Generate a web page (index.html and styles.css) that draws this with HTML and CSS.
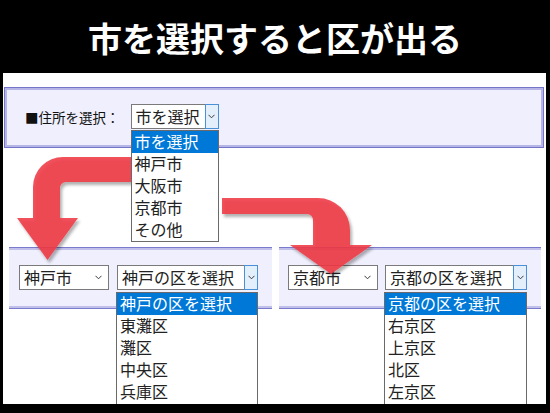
FILE: index.html
```html
<!DOCTYPE html>
<html lang="ja">
<head>
<meta charset="utf-8">
<title>市を選択すると区が出る</title>
<link rel="stylesheet" href="styles.css">
</head>
<body>
<div class="page">
  <header class="title">市を選択すると区が出る</header>
  <main class="frame">
    <section class="panel panel-top">
      <span class="label">■住所を選択：</span>
      <div class="select select-focus w-top">
        <span class="value">市を選択</span>
        <span class="btn"><svg class="chev" width="7" height="5" viewBox="0 0 7 5"><polyline points="0.5,0.8 3.5,3.8 6.5,0.8"/></svg></span>
        <ul class="list list-top">
          <li class="sel">市を選択</li>
          <li>神戸市</li>
          <li>大阪市</li>
          <li>京都市</li>
          <li>その他</li>
        </ul>
      </div>
    </section>

    <div class="row">
      <section class="panel panel-low">
        <div class="select select-plain w-city">
          <span class="value">神戸市</span>
          <span class="btn-plain"><svg class="chev" width="7" height="5" viewBox="0 0 7 5"><polyline points="0.5,0.8 3.5,3.8 6.5,0.8"/></svg></span>
        </div>
        <div class="select select-focus w-ward">
          <span class="value">神戸の区を選択</span>
          <span class="btn"><svg class="chev" width="7" height="5" viewBox="0 0 7 5"><polyline points="0.5,0.8 3.5,3.8 6.5,0.8"/></svg></span>
          <ul class="list list-low">
            <li class="sel">神戸の区を選択</li>
            <li>東灘区</li>
            <li>灘区</li>
            <li>中央区</li>
            <li>兵庫区</li>
          </ul>
        </div>
      </section>
      <section class="panel panel-low panel-right">
        <div class="select select-plain w-city">
          <span class="value">京都市</span>
          <span class="btn-plain"><svg class="chev" width="7" height="5" viewBox="0 0 7 5"><polyline points="0.5,0.8 3.5,3.8 6.5,0.8"/></svg></span>
        </div>
        <div class="select select-focus w-ward2">
          <span class="value">京都の区を選択</span>
          <span class="btn"><svg class="chev" width="7" height="5" viewBox="0 0 7 5"><polyline points="0.5,0.8 3.5,3.8 6.5,0.8"/></svg></span>
          <ul class="list list-low">
            <li class="sel">京都の区を選択</li>
            <li>右京区</li>
            <li>上京区</li>
            <li>北区</li>
            <li>左京区</li>
          </ul>
        </div>
      </section>
    </div>
  </main>

  <svg class="arrows" width="550" height="413" viewBox="0 0 550 413">
    <defs>
      <filter id="sh" x="-20%" y="-20%" width="140%" height="140%">
        <feDropShadow dx="2" dy="3" stdDeviation="1.8" flood-color="#000" flood-opacity="0.35"/>
      </filter>
    </defs>
    <path class="arrow" filter="url(#sh)" d="M140 157 L63 157 A30 30 0 0 0 33 187 L33 218 L17 218 L47.5 260 L78 218 L60 218 L60 188 A6 6 0 0 1 66 182 L140 182 Z"/>
    <path class="arrow" filter="url(#sh)" d="M222 198 L318 198 A32 32 0 0 1 350 230 L350 245 L372 245 L331 274 L290 245 L313 245 L313 220 A6 6 0 0 0 307 214 L222 214 Z"/>
  </svg>
</div>
</body>
</html>
```

FILE: styles.css
```css
html, body {
  margin: 0;
  padding: 0;
  background: #000;
}

.page {
  position: relative;
  width: 550px;
  height: 413px;
  background: #000;
  overflow: hidden;
  font-family: "Noto Sans CJK JP", "Noto Sans", sans-serif;
}

.title {
  height: 73px;
  display: flex;
  align-items: center;
  justify-content: center;
  padding-top: 2px;
  box-sizing: border-box;
  color: #fff;
  font-size: 34px;
  font-weight: 700;
  letter-spacing: 0;
}

.frame {
  position: relative;
  display: block;
  margin-left: 3px;
  width: 543px;
  height: 331px;
  box-sizing: border-box;
  padding-top: 14px;
  background: #fff;
  overflow: hidden;
}

.panel {
  box-sizing: border-box;
  background: #efeffd;
  display: flex;
  align-items: flex-start;
}

.panel-top {
  margin-left: 1px;
  width: 540px;
  height: 61px;
  border: 1px solid #7474c9;
  box-shadow: inset 0 0 0 2px #b5b5e6;
  padding: 16px 0 0 20px;
}

.label {
  height: 25px;
  line-height: 25px;
  font-size: 13.5px;
  color: #111;
  margin-right: 11px;
  margin-top: 1px;
}

.row {
  display: flex;
  gap: 7px;
  margin-top: 99px;
  padding-left: 6px;
}

.panel-low {
  width: 263px;
  height: 62px;
  border-top: 1px solid #7a7acc;
  border-bottom: 1px solid #7a7acc;
  box-shadow: inset 0 2px 0 #c0c0ea, inset 0 -2px 0 #c0c0ea;
  padding: 17px 0 0 10px;
  gap: 8px;
}

.panel-right {
  width: 262px;
  padding-left: 9px;
  gap: 7px;
}

.select {
  position: relative;
  height: 25px;
  box-sizing: border-box;
  display: flex;
  font-size: 16px;
  color: #222;
}

.w-top { width: 88px; }
.w-city { width: 90px; }
.w-ward { width: 141px; }
.w-ward2 { width: 142px; }

.select-plain {
  border: 1px solid #7a7a7a;
  background: #fff;
}

.value {
  flex: 1;
  height: 25px;
  line-height: 23px;
  box-sizing: border-box;
  padding-left: 4px;
  white-space: nowrap;
  overflow: hidden;
}

.select-plain .value {
  height: 23px;
  line-height: 23px;
}

.select-focus .value {
  border: 1px solid #7a7a7a;
  background: #fff;
}

.btn {
  width: 14px;
  height: 25px;
  box-sizing: border-box;
  margin-left: -1px;
  border: 1px solid #4a90d9;
  background: #e3effb;
  display: flex;
  align-items: center;
  justify-content: center;
}

.btn-plain {
  width: 16px;
  display: flex;
  align-items: center;
  justify-content: center;
  margin-right: 2px;
}

.chev polyline {
  fill: none;
  stroke: #3a3a3a;
  stroke-width: 1;
}

.list {
  position: absolute;
  z-index: 3;
  left: 0;
  top: 26px;
  width: 100%;
  box-sizing: border-box;
  margin: 0;
  padding: 0;
  list-style: none;
  background: #fff;
  border: 1px solid #6a6a6a;
}

.list-low {
  top: 27px;
  left: -1px;
  width: calc(100% + 1px);
  border-bottom: none;
  padding-bottom: 8px;
}

.list li {
  height: 22px;
  line-height: 21px;
  padding-left: 3px;
  font-size: 16px;
  color: #222;
  white-space: nowrap;
}

.list li.sel {
  background: #0078d7;
  color: #fff;
}

.arrows {
  position: absolute;
  left: 0;
  top: 0;
  z-index: 2;
  pointer-events: none;
}

.arrow {
  fill: #ef3a44;
  fill-opacity: 0.88;
}
```
